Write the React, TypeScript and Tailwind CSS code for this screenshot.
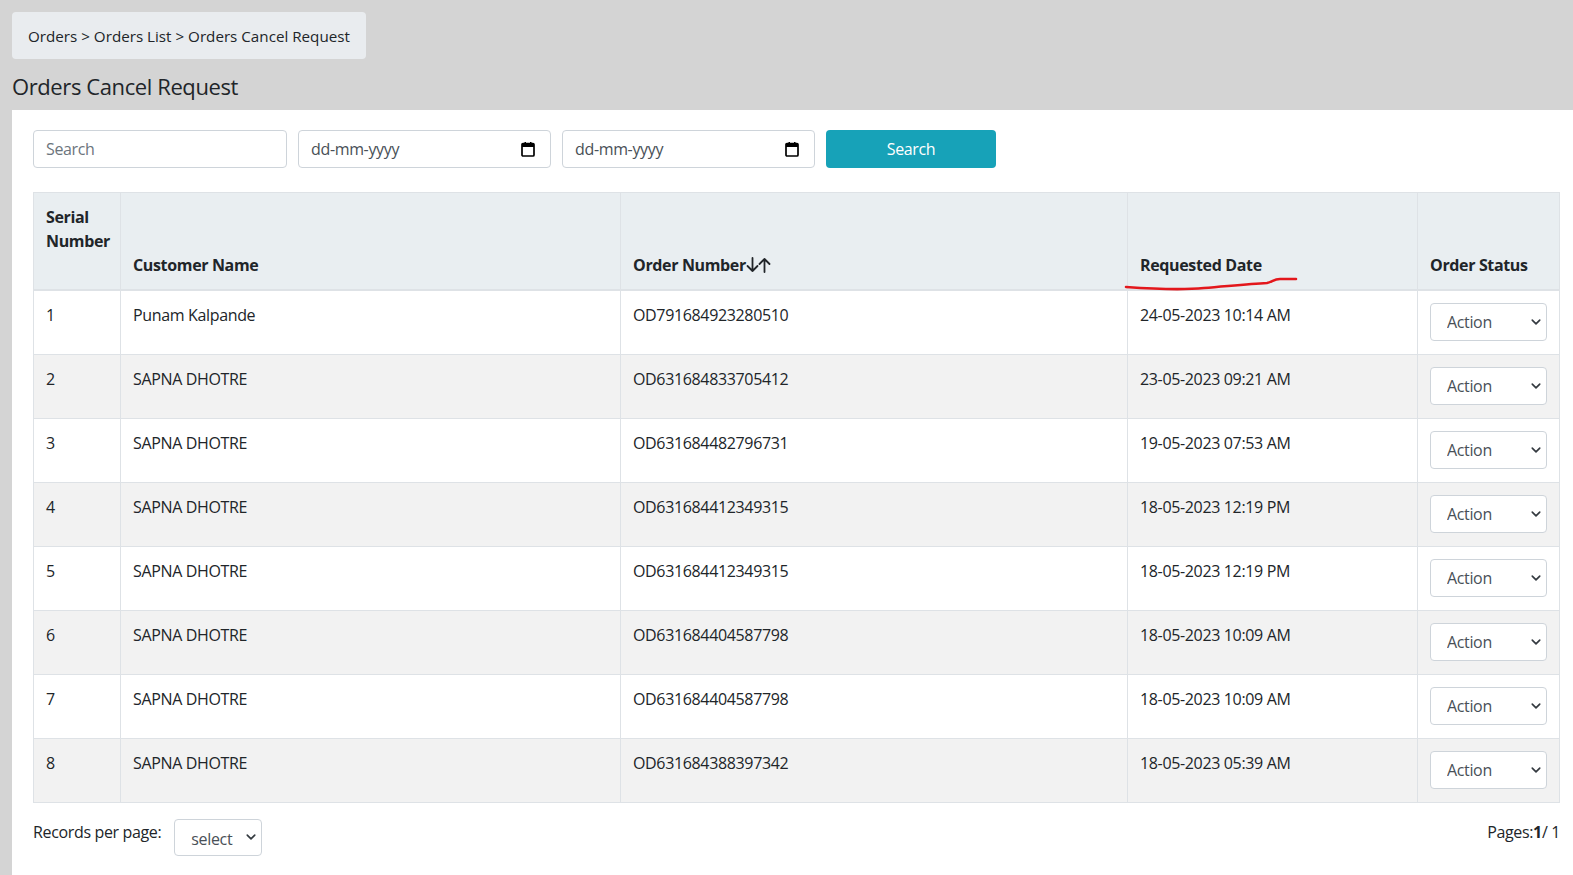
import React from 'react';

const rows = [
    { id: 1, name: 'Punam Kalpande', order: 'OD791684923280510', date: '24-05-2023 10:14 AM' },
    { id: 2, name: 'SAPNA DHOTRE', order: 'OD631684833705412', date: '23-05-2023 09:21 AM' },
    { id: 3, name: 'SAPNA DHOTRE', order: 'OD631684482796731', date: '19-05-2023 07:53 AM' },
    { id: 4, name: 'SAPNA DHOTRE', order: 'OD631684412349315', date: '18-05-2023 12:19 PM' },
    { id: 5, name: 'SAPNA DHOTRE', order: 'OD631684412349315', date: '18-05-2023 12:19 PM' },
    { id: 6, name: 'SAPNA DHOTRE', order: 'OD631684404587798', date: '18-05-2023 10:09 AM' },
    { id: 7, name: 'SAPNA DHOTRE', order: 'OD631684404587798', date: '18-05-2023 10:09 AM' },
    { id: 8, name: 'SAPNA DHOTRE', order: 'OD631684388397342', date: '18-05-2023 05:39 AM' },
];

function Chevron() {
    return (
        <svg width="10" height="10" viewBox="0 0 16 16" className="pointer-events-none absolute right-[6px] top-1/2 -translate-y-1/2">
            <path d="M2 5l6 6 6-6" fill="none" stroke="#343a40" strokeWidth="2.6" strokeLinecap="round" strokeLinejoin="round" />
        </svg>
    );
}

function CalendarIcon() {
    return (
        <svg width="14" height="15" viewBox="0 0 14 15">
            <rect x="1" y="1.5" width="12" height="12.5" rx="1" fill="none" stroke="#000" strokeWidth="1.7" />
            <rect x="1" y="1.5" width="12" height="3.5" fill="#000" />
            <rect x="3.5" y="0" width="1.5" height="2.5" fill="#000" />
            <rect x="9" y="0" width="1.5" height="2.5" fill="#000" />
        </svg>
    );
}

// sort arrows next to "Order Number"
function SortArrows() {
    return (
        <svg width="25" height="16" viewBox="0 0 25 16" className="inline-block align-[-2px]">
            <path d="M6.5 1v13M1.5 9l5 5 5-5" fill="none" stroke="#212529" strokeWidth="1.8" strokeLinecap="round" strokeLinejoin="round" />
            <path d="M18.5 15V2M13.5 7l5-5 5 5" fill="none" stroke="#212529" strokeWidth="1.8" strokeLinecap="round" strokeLinejoin="round" />
        </svg>
    );
}

function DateField() {
    return (
        <div className="flex h-[38px] w-[253px] items-center justify-between rounded border border-[#ced4da] bg-white pl-3 pr-[15px] text-[#495057]">
            <span>dd-mm-yyyy</span>
            <CalendarIcon />
        </div>
    );
}

export default function App() {
    return (
        <div className="h-[875px] overflow-hidden bg-[#d4d4d4] pt-[12px] font-['Open_Sans',sans-serif] text-[16px] tracking-[-0.35px] text-[#212529]">
            <div className="ml-[12px] inline-block rounded bg-[#e9ecef] px-4 pb-[10px] pt-[12px] text-[15.2px] leading-[25px] tracking-normal">
                Orders &gt; Orders List &gt; Orders Cancel Request
            </div>
            <h1 className="ml-[12px] mt-[10px] text-[22px] font-medium leading-[34px] tracking-[-0.4px]">Orders Cancel Request</h1>

            <div className="ml-[12px] mt-[7px] h-[800px] bg-white pl-[21px] pr-[13px] pt-[20px]">
                <div className="flex gap-[11px]">
                    <input
                        placeholder="Search"
                        className="h-[38px] w-[254px] rounded border border-[#ced4da] px-3 outline-none placeholder:text-[#6c757d]"
                    />
                    <DateField />
                    <DateField />
                    <button className="h-[38px] w-[170px] rounded bg-[#17a2b8] text-white">Search</button>
                </div>

                <table className="mt-[24px] w-full table-fixed border-collapse">
                    <colgroup>
                        <col className="w-[87px]" />
                        <col className="w-[500px]" />
                        <col className="w-[507px]" />
                        <col className="w-[290px]" />
                        <col />
                    </colgroup>
                    <thead>
                        <tr className="h-[97px] bg-[#e9eef1] text-left font-bold leading-6">
                            <th className="border border-b-2 border-[#dee2e6] px-3 pt-3 align-top">Serial Number</th>
                            <th className="border border-b-2 border-[#dee2e6] px-3 pb-3 align-bottom">Customer Name</th>
                            <th className="border border-b-2 border-[#dee2e6] px-3 pb-3 align-bottom">
                                Order Number
                                <SortArrows />
                            </th>
                            <th className="relative border border-b-2 border-[#dee2e6] px-3 pb-3 align-bottom">
                                Requested Date
                                <svg width="180" height="18" viewBox="0 0 180 18" className="absolute left-[-4px] top-[82px] overflow-visible">
                                    <path
                                        d="M2 12 C 30 14 60 15 80 13 C 105 11 125 9 143 8 C 148 7 150 4 156 4 L 172 4"
                                        fill="none"
                                        stroke="#e3171c"
                                        strokeWidth="2.6"
                                        strokeLinecap="round"
                                    />
                                </svg>
                            </th>
                            <th className="border border-b-2 border-[#dee2e6] px-3 pb-3 align-bottom">Order Status</th>
                        </tr>
                    </thead>
                    <tbody>
                        {rows.map((r, i) => (
                            <tr key={r.id} className={i % 2 === 1 ? 'bg-[#f2f2f2]' : 'bg-white'}>
                                <td className="border border-[#dee2e6] px-3 pt-3 align-top leading-6">{r.id}</td>
                                <td className="border border-[#dee2e6] px-3 pt-3 align-top leading-6">{r.name}</td>
                                <td className="border border-[#dee2e6] px-3 pt-3 align-top leading-6">{r.order}</td>
                                <td className="border border-[#dee2e6] px-3 pt-3 align-top leading-6">{r.date}</td>
                                <td className="border border-[#dee2e6] px-3 pb-[13px] pt-3 align-top">
                                    <div className="relative w-[117px]">
                                        <select className="h-[38px] w-full appearance-none rounded border border-[#ced4da] bg-white pl-4 pt-px text-[#495057] outline-none">
                                            <option>Action</option>
                                        </select>
                                        <Chevron />
                                    </div>
                                </td>
                            </tr>
                        ))}
                    </tbody>
                </table>

                <div className="mt-[16px] flex items-start justify-between">
                    <div className="flex items-start gap-[13px]">
                        <span className="mt-[1px] leading-6">Records per page:</span>
                        <div className="relative w-[88px]">
                            <select className="h-[37px] w-full appearance-none rounded border border-[#ced4da] bg-white pl-4 pt-[3px] text-[#495057] outline-none">
                                <option>select</option>
                            </select>
                            <Chevron />
                        </div>
                    </div>
                    <span className="mt-[1px] leading-6">
                        Pages:<b>1</b>/ 1
                    </span>
                </div>
            </div>
        </div>
    );
}
